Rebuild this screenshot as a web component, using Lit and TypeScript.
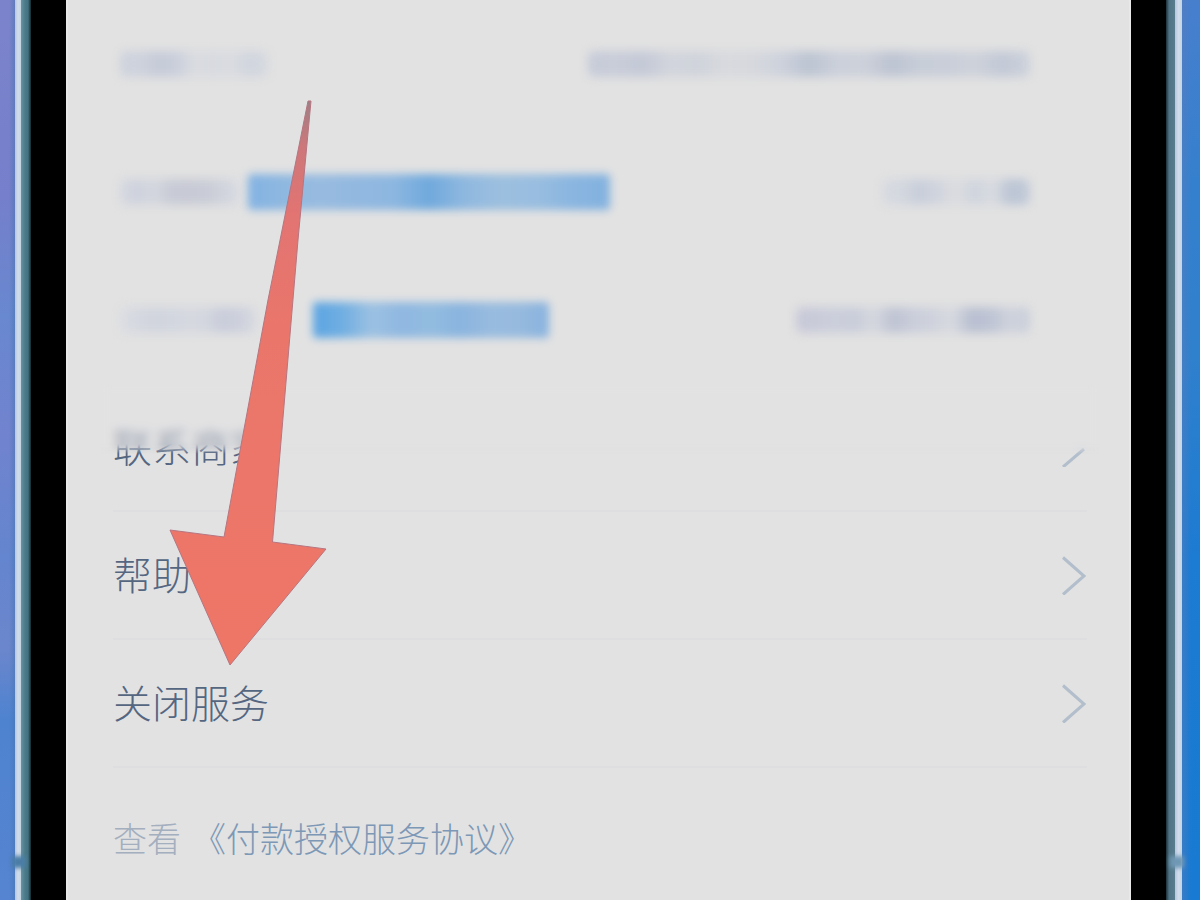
import { LitElement, html, css } from "lit";
import { customElement, property } from "lit/decorators.js";
import { styleMap } from "lit/directives/style-map.js";

interface Smudge {
  width: number;
  tones: string[];
}

interface MaskedRow {
  label: Smudge;
  tag?: Smudge;
  gap: number;
  value: Smudge;
}

const MASKED_ROWS: MaskedRow[] = [
  {
    label: {
      width: 148,
      tones: ["#cdd2dc", "#cfd3dd", "#c6cbd8", "#c9cedb", "#dadce0", "#d7dae0", "#dadce0", "#d0d5de", "#d6d9df"],
    },
    gap: 0,
    value: {
      width: 442,
      tones: [
        "#c6cbd9", "#c9cdd9", "#c4c9d7", "#d2d5dc", "#cfd3db", "#d8dade", "#d6d8dd", "#cdd2dc",
        "#bcc4d2", "#cbd0da", "#cdd1da", "#bdc4d2", "#c8ced8", "#c9ced9", "#ced2da", "#c2c9d6", "#cdd2db",
      ],
    },
  },
  {
    label: {
      width: 120,
      tones: ["#d5d8e0", "#ced2dd", "#d4d7de", "#c8cbd6", "#c8cad5", "#c9ccd6", "#d0d3dc", "#dadce3"],
    },
    tag: {
      width: 362,
      tones: [
        "#82b2e2", "#8fb8e0", "#98bbe0", "#92b8e0", "#8db7e0", "#70a9dd", "#8fb8df", "#9cbfdf",
        "#98bde0", "#89b5e0", "#82b1df",
      ],
    },
    gap: 8,
    value: {
      width: 148,
      tones: ["#d7dae0", "#d4d8df", "#c8ceda", "#d0d4dd", "#dcdde0", "#cfd4dd", "#d9dbe0", "#bac4d4", "#c4ccd9"],
    },
  },
  {
    label: {
      width: 136,
      tones: ["#dbdde3", "#d5d8e0", "#d1d4dd", "#d2d6df", "#d5d8df", "#d4d7df", "#c9cdda", "#cdd0dc", "#d8dae1"],
    },
    tag: {
      width: 236,
      tones: ["#5ba4e2", "#70aee2", "#9cc1e2", "#8fb7e1", "#93bce0", "#8ab4df", "#98bbdf", "#96bade", "#88b2df"],
    },
    gap: 57,
    value: {
      width: 234,
      tones: [
        "#c8c9d8", "#c9cbd9", "#cccfdb", "#c9cdd9", "#d6d8df", "#bec3d3", "#caceda", "#cfd2dc",
        "#d8dae0", "#b9bfd1", "#bec4d4", "#cfd3dc", "#c8ceda",
      ],
    },
  },
];

@customElement("blurred-strip")
class BlurredStrip extends LitElement {
  @property({ attribute: false }) smudge!: Smudge;
  @property({ type: Boolean, reflect: true }) strong = false;

  static styles = css`
    :host {
      display: block;
      flex: none;
    }
    .ink {
      height: 26px;
      border-radius: 6px;
      filter: blur(5px);
    }
    :host([strong]) .ink {
      height: 36px;
      border-radius: 4px;
      filter: blur(4px);
    }
  `;

  render() {
    return html`<div
      class="ink"
      style=${styleMap({
        width: `${this.smudge.width}px`,
        backgroundImage: `linear-gradient(90deg, ${this.smudge.tones.join(", ")})`,
      })}
    ></div>`;
  }
}

@customElement("app-root")
class AppRoot extends LitElement {
  static styles = css`
    :host {
      display: block;
      font-family: "Noto Sans CJK SC", "Noto Sans", sans-serif;
    }
    .stage {
      position: relative;
      display: flex;
      min-height: 100vh;
      overflow: hidden;
    }
    .edge {
      position: relative;
      flex: none;
      display: grid;
    }
    .edge-left {
      grid-template-columns: 15px 6px 10px 35px;
    }
    .edge-right {
      grid-template-columns: 35px 9px 7px 18px;
    }
    .bezel {
      background: #000;
    }
    .rim-left {
      background: linear-gradient(90deg, #6893a4, #4b7a88 40%, #427383 70%, #14282c);
    }
    .rim-right {
      background: linear-gradient(90deg, #1c3038, #4f7486 35%, #5a7d8e);
    }
    .shine {
      background: linear-gradient(90deg, #b6c5e0, #d0dcec 50%, #c3d5e0);
    }
    .backdrop-left {
      background: linear-gradient(90deg, transparent 60%, rgba(70, 115, 175, 0.5)),
        linear-gradient(#7b84cb, #757fcb 22%, #6888cf 35%, #7183ce 48%, #6485cf 62%, #6b86cc 72%, #4e83d0 80%, #5684d0);
    }
    .backdrop-right {
      background: linear-gradient(90deg, rgba(90, 125, 185, 0.5), transparent 50%),
        linear-gradient(#477fcd, #3580ce 20%, #2f80cd 40%, #1c7bd2 62%, #187ad2);
    }
    .notch {
      position: absolute;
      bottom: 32px;
      width: 14px;
      height: 12px;
      filter: blur(2px);
    }
    .edge-left .notch {
      left: 12px;
      background: #4a7da6;
    }
    .edge-right .notch {
      right: 16px;
      background: #6f98b5;
    }
    .screen {
      flex: 1;
      min-width: 0;
      padding: 0 44px 0 47px;
      background: #e2e2e2;
      box-shadow: inset 2px 0 1px #e9e9e9, inset -2px 0 1px #e9e9e9;
    }
    .row {
      position: relative;
      box-sizing: border-box;
      display: flex;
      align-items: center;
      width: 100%;
      height: 128px;
      margin: 0;
      padding: 0;
      border: 0;
      background: none;
      font: inherit;
      font-size: 39px;
      font-weight: 300;
      line-height: 56px;
      color: #556681;
      text-align: left;
    }
    .masked {
      padding: 0 57px 0 7px;
    }
    .value {
      margin-left: auto;
    }
    .ruled {
      border-bottom: 2px solid #dedee0;
      cursor: pointer;
    }
    .name {
      flex: 1;
      padding-bottom: 4px;
    }
    .chevron {
      flex: none;
      width: 26px;
      height: 40px;
      fill: none;
      stroke: #b3becd;
      stroke-width: 3;
    }
    .veil {
      position: absolute;
      top: 0;
      left: -12px;
      right: -12px;
      height: 70px;
      background: rgba(226, 226, 228, 0.35);
      backdrop-filter: blur(5px);
      mask-image: linear-gradient(#000 60px, transparent);
    }
    .terms {
      display: flex;
      gap: 11px;
      margin: 0;
      padding-top: 45px;
      font-size: 34px;
      font-weight: 300;
      line-height: 50px;
      color: #a3afbf;
    }
    .terms a {
      color: #7c98b6;
      text-decoration: none;
    }
    .pointer {
      position: absolute;
      top: 98px;
      left: 168px;
      width: 160px;
      height: 570px;
      pointer-events: none;
    }
  `;

  private chevron(folded = false) {
    return html`<svg class="chevron" viewBox="0 0 26 40" aria-hidden="true">
      <path d=${folded ? "M23 22 L2 40" : "M2 2.5 L23 21 L2 39.5"} />
    </svg>`;
  }

  private maskedRow(row: MaskedRow) {
    return html`<div class="row masked">
      <blurred-strip .smudge=${row.label}></blurred-strip>
      ${row.tag
        ? html`<blurred-strip
            strong
            .smudge=${row.tag}
            style=${styleMap({ marginLeft: `${row.gap}px` })}
          ></blurred-strip>`
        : null}
      <blurred-strip class="value" .smudge=${row.value}></blurred-strip>
    </div>`;
  }

  render() {
    return html`<div class="stage">
      <div class="edge edge-left">
        <div class="backdrop-left"></div>
        <div class="shine"></div>
        <div class="rim-left"></div>
        <div class="bezel"></div>
        <div class="notch"></div>
      </div>

      <main class="screen">
        ${MASKED_ROWS.map((row) => this.maskedRow(row))}
        <button class="row ruled" type="button">
          <span class="name">联系商家</span>
          ${this.chevron(true)}
          <span class="veil"></span>
        </button>
        <button class="row ruled" type="button">
          <span class="name">帮助</span>
          ${this.chevron()}
        </button>
        <button class="row ruled" type="button">
          <span class="name">关闭服务</span>
          ${this.chevron()}
        </button>
        <p class="terms">
          <span>查看</span>
          <a href="#terms">《付款授权服务协议》</a>
        </p>
      </main>

      <div class="edge edge-right">
        <div class="bezel"></div>
        <div class="rim-right"></div>
        <div class="shine"></div>
        <div class="backdrop-right"></div>
        <div class="notch"></div>
      </div>

      <svg class="pointer" viewBox="168 98 160 570" aria-hidden="true">
        <defs>
          <linearGradient id="tip" x1="0" y1="0" x2="0" y2="1">
            <stop offset="0" stop-color="#9d7f86" />
            <stop offset="0.08" stop-color="#cd777a" />
            <stop offset="0.2" stop-color="#e27472" />
            <stop offset="0.4" stop-color="#ea766b" />
            <stop offset="1" stop-color="#ee7667" />
          </linearGradient>
        </defs>
        <path
          d="M308 101 L311 101 L298 240 L272.5 542 L326 549 L230 665 L170 530 L224 537 L268 300 Z"
          fill="url(#tip)"
          stroke="#b57580"
          stroke-width="1"
          stroke-linejoin="round"
        />
      </svg>
    </div>`;
  }
}
